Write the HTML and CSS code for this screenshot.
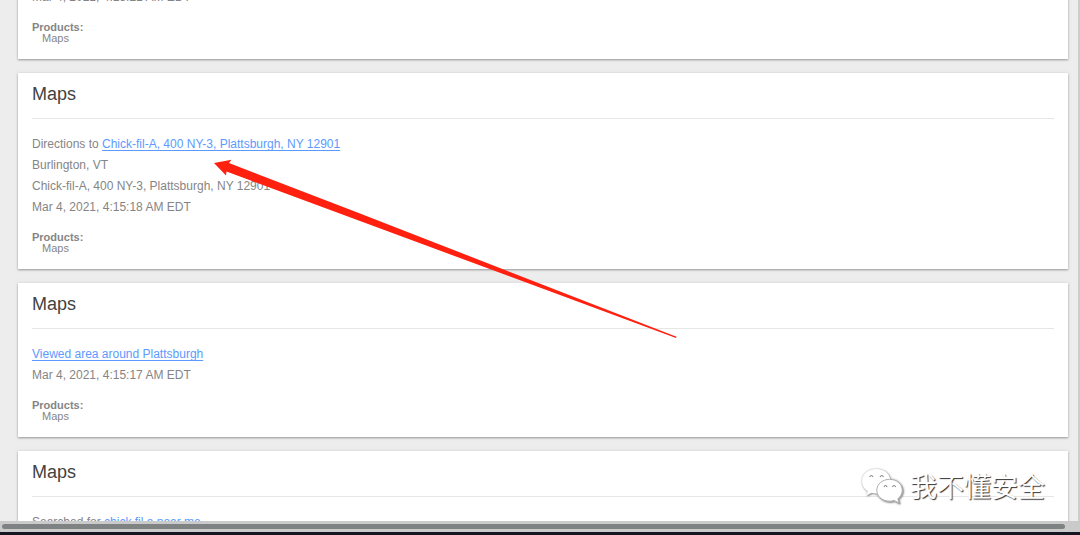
FILE: index.html
```html
<!DOCTYPE html>
<html lang="en">
<head>
<meta charset="utf-8">
<title>My Activity</title>
<link rel="stylesheet" href="styles.css">
</head>
<body>
<div class="window">
  <div class="view">
    <main class="list">
      <article class="card">
        <div class="body"><p>Mar 4, 2021, 4:15:21 AM EDT</p></div>
        <div class="products"><strong>Products:</strong><p class="product">Maps</p></div>
      </article>
      <article class="card">
        <h2 class="title">Maps</h2>
        <div class="body">
          <p>Directions to <a href="#directions">Chick-fil-A, 400 NY-3, Plattsburgh, NY 12901</a></p>
          <p>Burlington, VT</p>
          <p>Chick-fil-A, 400 NY-3, Plattsburgh, NY 12901</p>
          <p>Mar 4, 2021, 4:15:18 AM EDT</p>
        </div>
        <div class="products"><strong>Products:</strong><p class="product">Maps</p></div>
      </article>
      <article class="card">
        <h2 class="title">Maps</h2>
        <div class="body">
          <p><a href="#area">Viewed area around Plattsburgh</a></p>
          <p>Mar 4, 2021, 4:15:17 AM EDT</p>
        </div>
        <div class="products"><strong>Products:</strong><p class="product">Maps</p></div>
      </article>
      <article class="card">
        <h2 class="title">Maps</h2>
        <div class="body"><p>Searched for <a href="#search">chick fil a near me</a></p></div>
      </article>
    </main>
    <div class="vbar"></div>
  </div>
  <div class="hbar"><div class="thumb"></div></div>
  <svg class="arrow" width="464" height="180" viewBox="213 159 464 180" aria-hidden="true">
    <path d="M214 163 L231.500 159.800 L229 163 L360 213.500 L676.500 336.800 L676 338 L360 221 L226.500 171.500 L226 175.500 Z" fill="#ff2010"/>
  </svg>
  <div class="watermark">
    <svg class="logo" width="44" height="38" viewBox="0 0 46 40" fill="#fff" aria-hidden="true">
      <path d="M17 2C8.500 2 2 7.500 2 15c0 4.500 2.300 8 6 10.500L6.500 30l5.500-2.800c1.600.5 3.300.8 5 .8 8 0 15-5.500 15-13S25.500 2 17 2Z"/>
      <path class="front" d="M31 13c-7.500 0-13.500 5-13.500 11.500S23.500 36 31 36c1.700 0 3.300-.3 4.800-.8L41 38l-1.400-4.500c2.900-2.200 4.700-5.300 4.700-9C44.300 18 38.500 13 31 13Z"/>
      <g fill="none" stroke="#888" stroke-width="1.200"><path d="M10 10.500q1.800-3 3.600 0M21 10.500q1.800-3 3.600 0M25 21q1.700-3 3.400 0M34 21q1.700-3 3.400 0"/></g>
    </svg>
    <span lang="zh">我不懂安全</span>
  </div>
</div>
</body>
</html>
```
FILE: styles.css
```css
* { box-sizing: border-box; }
body, p, h2 { margin: 0; }
body {
  background: #ededed;
  color: #858585;
  font: 12px/21px "Liberation Sans", Arial, sans-serif;
}
.window {
  position: relative;
  display: flex;
  flex-direction: column;
  height: 100vh;
  overflow: hidden;
  border-bottom: 3px solid #171522;
}
.view {
  display: flex;
  flex: 1;
  min-height: 0;
  overflow: hidden;
}
.list {
  flex: 1;
  display: flex;
  flex-direction: column;
  gap: 14px;
  margin-top: -28px;
  padding: 0 10px 0 18px;
}
.card {
  flex: none;
  display: flow-root;
  padding: 0 14px 15px;
  background: #fff;
  box-shadow: 0 1px 2px #999, 0 0 4px #ddd;
}
.title {
  padding: 11px 0 13px;
  border-bottom: 1px solid #e6e6e6;
  color: #424242;
  font-size: 18px;
  line-height: 21px;
  font-weight: 400;
}
.body { margin: 15px 0 14px; }
.body a {
  color: #5c9aff;
  text-underline-offset: 2px;
}
.products {
  font-size: 11px;
  line-height: 11px;
}
.product { padding-left: 10px; }
.vbar {
  width: 2px;
  background: #cdcdcd;
}
.hbar {
  height: 11px;
  padding: 3px 15px 3px 2px;
  background: #cacaca;
}
.thumb {
  height: 5px;
  border-radius: 3px;
  background: #7e8282;
}
.arrow {
  position: absolute;
  top: 159px;
  left: 213px;
}
.watermark {
  position: absolute;
  right: 35px;
  bottom: 26px;
  display: flex;
  align-items: center;
  gap: 6px;
  color: #fff;
  font: 400 27px/40px "Noto Sans CJK SC", sans-serif;
  text-shadow: 1px 1px 1px #333;
}
.logo { filter: drop-shadow(0 0 1px #bbb) drop-shadow(1px 1px 0 #999); }
.front {
  stroke: #aaa;
  stroke-width: 1;
}
```
